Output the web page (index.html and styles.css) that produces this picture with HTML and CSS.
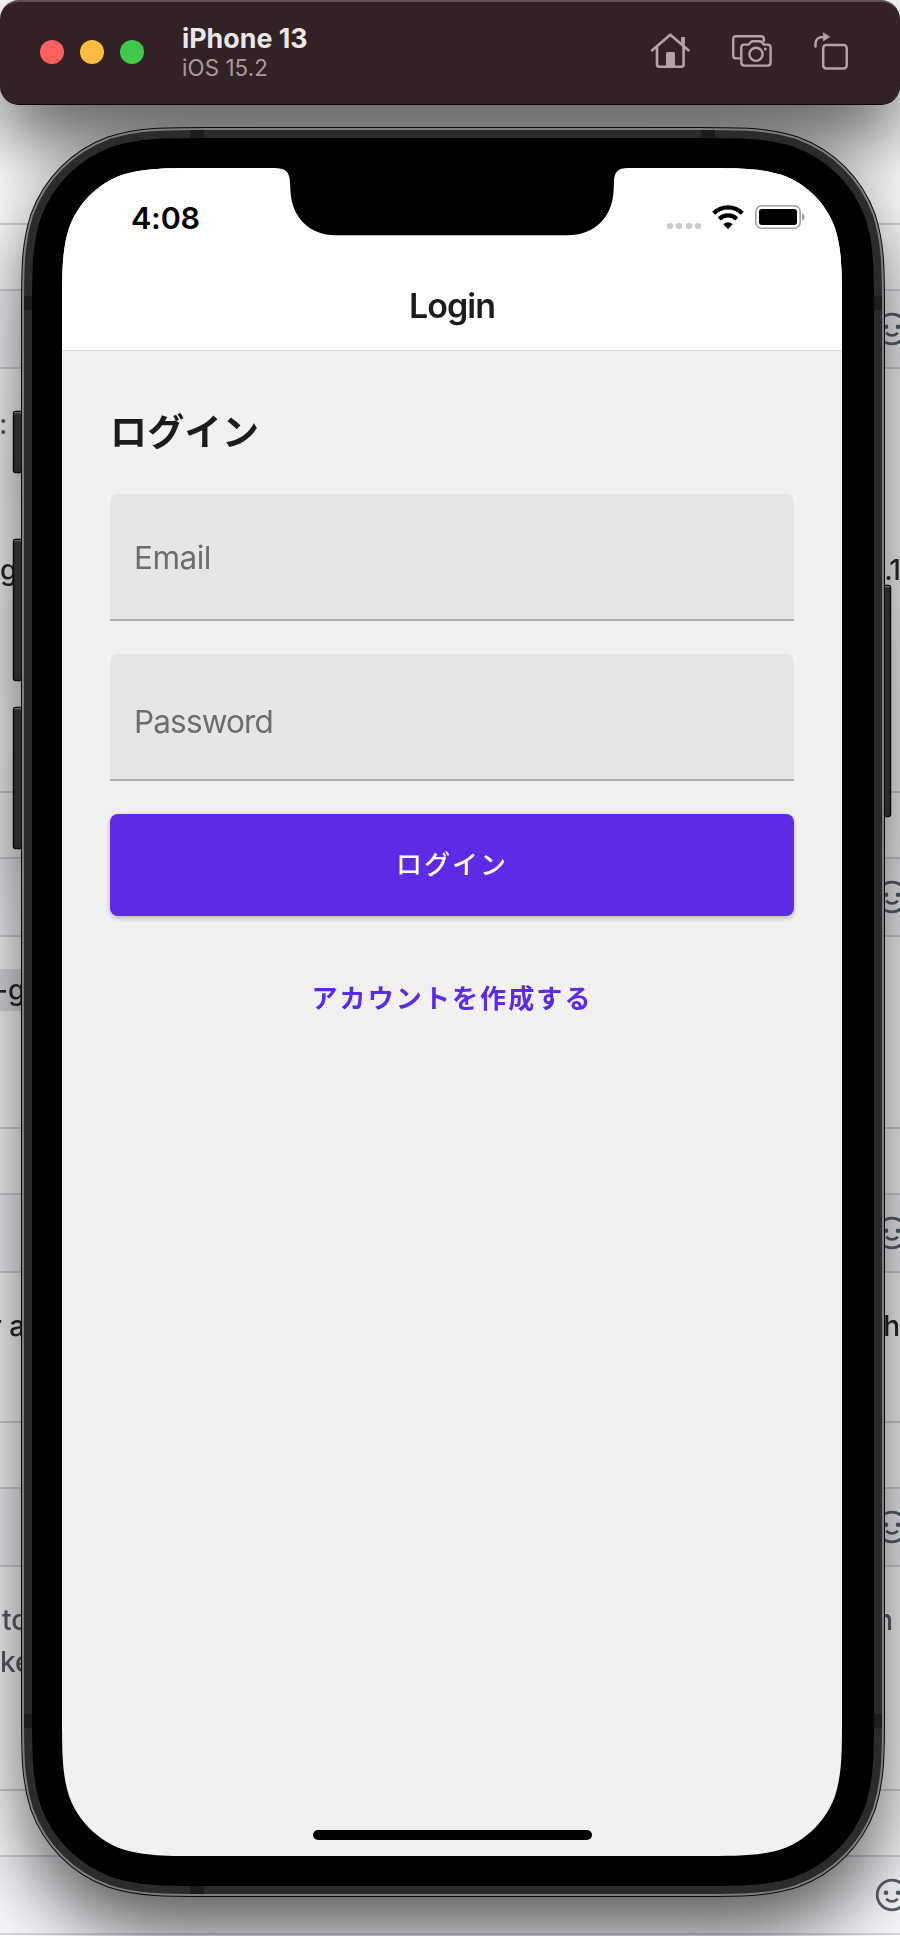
FILE: index.html
```
<!DOCTYPE html>
<html lang="ja">
<head>
<meta charset="utf-8">
<title>iPhone 13</title>
<link rel="stylesheet" href="styles.css">
</head>
<body>
<svg width="0" height="0" class="defs">
  <defs>
    <g id="smile">
      <circle cx="17" cy="17" r="14.8" fill="none" stroke="currentColor" stroke-width="2.8"/>
      <circle cx="11" cy="14.8" r="2.3" fill="currentColor"/>
      <circle cx="23" cy="14.8" r="2.3" fill="currentColor"/>
      <path d="M12 21.4c2.6 2.6 7.4 2.6 10 0" fill="none" stroke="currentColor" stroke-width="2.8" stroke-linecap="round"/>
    </g>
    <path id="frame" d="M206.76,168 L699.24,168 C740.92,168 761.76,168 784.2,175.09 C808.69,184.01 827.99,203.31 836.91,227.8 C844,250.24 844,271.08 844,312.76 L844,1711.24 C844,1752.92 844,1773.76 836.91,1796.2 C827.99,1820.69 808.69,1839.99 784.2,1848.91 C761.76,1856 740.92,1856 699.24,1856 L206.76,1856 C165.08,1856 144.24,1856 121.8,1848.91 C97.31,1839.99 78.01,1820.69 69.09,1796.2 C62,1773.76 62,1752.92 62,1711.24 L62,312.76 C62,271.08 62,250.24 69.09,227.8 C78.01,203.31 97.31,184.01 121.8,175.09 C144.24,168 165.08,168 206.76,168Z"/>
  </defs>
</svg>

<main class="desktop">
  <!-- page behind the simulator window -->
  <div class="page">
    <div class="row h225"></div>
    <div class="row h66"></div>
    <div class="row h78 bar"><svg class="face" width="34" height="34"><use href="#smile"/></svg></div>
    <div class="row h424 lines">
      <div class="line muted colon"><span>:</span></div>
      <div class="line release"><span>g</span><span class="version">.1</span></div>
    </div>
    <div class="row h66"></div>
    <div class="row h78 bar"><svg class="face" width="34" height="34"><use href="#smile"/></svg></div>
    <div class="row h192 lines"><div class="line code"><span class="chip">-g</span></div></div>
    <div class="row h66"></div>
    <div class="row h78 bar"><svg class="face" width="34" height="34"><use href="#smile"/></svg></div>
    <div class="row h150 lines"><div class="line para"><span>r a</span><span class="end">h</span></div></div>
    <div class="row h66"></div>
    <div class="row h78 bar"><svg class="face" width="34" height="34"><use href="#smile"/></svg></div>
    <div class="row h224 lines">
      <div class="line muted quote"><span>to</span><span class="end-n">n</span></div>
      <div class="line muted quote-next"><span>ke</span></div>
    </div>
    <div class="row h66"></div>
    <div class="row h78 bar"><svg class="face" width="34" height="34"><use href="#smile"/></svg></div>
  </div>

  <div class="simulator">
    <header class="toolbar">
      <div class="lights"><i class="red"></i><i class="yellow"></i><i class="green"></i></div>
      <div class="titles"><b class="device">iPhone 13</b><span class="os">iOS 15.2</span></div>
      <div class="tools">
        <svg width="40" height="38" viewBox="0 0 40 38" fill="none" stroke="#b3a3a6" stroke-width="2.6" stroke-linecap="round" stroke-linejoin="round">
          <path d="M2.2 18.3 L20.3 2.7 L38.4 18.3 M7 15v17.5q0 2.3 2.3 2.3h22q2.3 0 2.3-2.3V15"/>
          <path d="M31.2 5h3.7v10l-3.7-3z" fill="#b3a3a6" stroke="none"/>
          <path d="M16 35V21.5q0-1.500 1.500-1.500h6q1.500 0 1.500 1.500V35z" fill="#b3a3a6" stroke="none"/>
        </svg>
        <svg width="40" height="32" viewBox="0 0 40 32" fill="none" stroke="#b3a3a6" stroke-width="2.4" stroke-linecap="round" stroke-linejoin="round">
          <path d="M8 23.400H4.200q-3 0-3-3V4.200q0-3 3-3h25q2.600 0 2.600 2.600V6"/>
          <path d="M11.800 9.600h4.200q1.200 0 2-1.400l.8-.9q.8-1 2-1h7q1.200 0 2 1l.8.9q.8 1.400 2 1.400h3q3 0 3 3v15q0 3-3 3H12.300q-3 0-3-3v-15q0-3 3-3z"/>
          <circle cx="24" cy="19.300" r="6.600"/><circle cx="33.300" cy="14" r="1.500" fill="#b3a3a6" stroke="none"/>
        </svg>
        <svg width="34" height="38" viewBox="0 0 34 38" fill="none" stroke="#b3a3a6" stroke-width="2.500" stroke-linecap="round">
          <rect x="9.200" y="13" width="23.500" height="23.500" rx="3"/>
          <path d="M1.500 14.500v-3c0-4 3-6.600 8-6.600"/>
          <path d="M9.300.8v8.200l6.300-4.100z" fill="#b3a3a6" stroke="#b3a3a6" stroke-width=".6"/>
        </svg>
      </div>
    </header>

    <section class="phone">
      <svg class="bezel" width="900" height="1936" viewBox="0 0 900 1936">
        <g fill="#2b2b2b" stroke="#0c0c0c" stroke-width="1.500">
          <rect x="13.500" y="411.500" width="12" height="61" rx="2"/>
          <rect x="13.500" y="539.500" width="12" height="141" rx="2"/>
          <rect x="13.500" y="707.500" width="12" height="141" rx="2"/>
          <rect x="880" y="585.500" width="10.500" height="231" rx="2"/>
        </g>
        <g stroke="#6c6c6c" stroke-width="1.300">
          <path d="M14.500 412.700h7M14.500 540.700h7M14.500 708.700h7M885 586.700h5"/>
        </g>
        <use href="#frame" fill="#000" stroke="#0a0a0a" stroke-width="82"/>
        <use href="#frame" fill="#000" stroke="#7e7c7c" stroke-width="80"/>
        <use href="#frame" fill="#000" stroke="#2b2b2b" stroke-width="76"/>
        <path fill="#1c1c1c" d="M190 130h14v8h-14zM701 130h14v8h-14zM190 1886h14v8h-14zM24 296h8v14h-8zM874 296h8v14h-8zM24 1714h8v14h-8zM874 1714h8v14h-8z"/>
        <use href="#frame" fill="#000" stroke="#000" stroke-width="60"/>
      </svg>

      <div class="screen">
        <svg class="notch" width="340" height="68" viewBox="212 0 340 68"><path d="M212,0 C223,0 227.500,3 228,14 L228.500,24 C230,49 247,67.300 274,67.300 L505,67.300 C533,67.300 550,49 551.500,24 L552,14 C552,4 556,0 566,0Z"/></svg>
        <div class="top">
          <div class="status">
            <span class="clock">4:08</span>
            <div class="signals">
              <div class="dots"><i></i><i></i><i></i><i></i></div>
              <svg class="wifi" width="32" height="24" viewBox="0 0 32 24" fill="none" stroke="#000" stroke-width="4.400">
                <path d="M1.700 8.300a20.200 20.200 0 0 1 28.600 0"/>
                <path d="M7.300 14a12.300 12.300 0 0 1 17.400 0" stroke-width="4.200"/>
                <path d="M16 24l-4.700-4.700a6.600 6.600 0 0 1 9.400 0z" fill="#000" stroke="none"/>
              </svg>
              <svg width="50" height="24" viewBox="0 0 50 24"><rect x=".800" y=".800" width="44.400" height="22.400" rx="6" fill="none" stroke="#a0a0a0" stroke-width="1.600"/><rect x="4" y="4" width="38" height="16" rx="3" fill="#000"/><path d="M47 8.500c3.600 1 3.600 6 0 7z" fill="#a0a0a0"/></svg>
            </div>
          </div>
          <h1 class="nav">Login</h1>
        </div>
        <div class="form">
          <h2 class="heading">ログイン</h2>
          <div class="field email"><span>Email</span></div>
          <div class="field password"><span>Password</span></div>
          <div class="button"><span>ログイン</span></div>
          <div class="link">アカウントを作成する</div>
        </div>
        <div class="home"></div>
      </div>
    </section>
  </div>
</main>
</body>
</html>
```
FILE: styles.css
```
* { box-sizing: border-box; }
body { margin: 0; font-family: Inter, "Noto Sans CJK JP", sans-serif; }
.defs { display: block; }
.desktop { position: relative; width: 900px; height: 1936px; overflow: hidden; background: #fff; }

/* page behind the window */
.page { display: flex; flex-direction: column; will-change: transform; }
.row { flex: none; border-bottom: 2px solid #d0d7de; display: flex; overflow: hidden; }
.bar { background: #f5f8fb; align-items: center; justify-content: flex-end; }
.face { color: #57606a; margin-right: -9px; flex: none; }
.lines { flex-direction: column; }
.h66 { height: 66px; } .h78 { height: 78px; } .h150 { height: 150px; }
.h192 { height: 192px; } .h224 { height: 224px; } .h225 { height: 225px; } .h424 { height: 424px; }
.line { display: flex; justify-content: space-between; font-size: 28px; font-weight: 500; line-height: 42px; color: #24292f; white-space: nowrap; flex: none; }
.muted { color: #57606a; }
.colon { margin: 34px 0 0 -1px; }
.release { margin: 104px 0 0 0; }
.version { margin-right: 0; letter-spacing: -1px; }
.code { margin-top: 32px; }
.chip { background: #dfe1e4; width: 40px; margin-left: -5px; }
.para { margin: 32px 0 0 -9px; }
.quote { margin: 32px 0 0 2px; }
.end-n { margin-right: 7px; }

/* simulator window */
.simulator { position: absolute; inset: 0; filter: drop-shadow(0 36px 38px rgba(0,0,0,.64)); }
.toolbar { position: relative; height: 105px; border-radius: 19px; background: #332225; border-top: 2px solid #5e5052; border-bottom: 1px solid #0b0607; display: flex; align-items: center; padding: 0 52px 2px 40px; }
.lights { display: flex; gap: 16px; margin-right: 38px; }
.lights i { width: 24px; height: 24px; border-radius: 50%; }
.red { background: #fc615d; } .yellow { background: #fdbc40; } .green { background: #3fc84b; }
.titles { flex: 1; display: flex; flex-direction: column; margin-top: -1px; }
.device { font-size: 26.8px; line-height: 32px; font-weight: 700; color: #ebe6e7; }
.os { font-size: 22.3px; line-height: 27px; color: #a99a9d; letter-spacing: .1px; }
.tools { display: flex; align-items: center; gap: 42px; margin-top: -3px; }

.bezel { position: absolute; left: 0; top: 0; }
.screen { position: absolute; left: 62px; top: 168px; width: 780px; height: 1688px; background: #f1f1f1; display: flex; flex-direction: column;
  clip-path: path("M144.76,0 L635.24,0 C676.92,0 697.76,0 720.2,7.09 C744.69,16.01 763.99,35.31 772.91,59.8 C780,82.24 780,103.08 780,144.76 L780,1543.24 C780,1584.92 780,1605.76 772.91,1628.2 C763.99,1652.69 744.69,1671.99 720.2,1680.91 C697.76,1688 676.92,1688 635.24,1688 L144.76,1688 C103.08,1688 82.24,1688 59.8,1680.91 C35.31,1671.99 16.01,1652.69 7.09,1628.2 C0,1605.76 0,1584.92 0,1543.24 L0,144.76 C0,103.08 0,82.24 7.09,59.8 C16.01,35.31 35.31,16.01 59.8,7.09 C82.24,0 103.08,0 144.76,0Z"); }
.notch { position: absolute; left: 212px; top: 0; overflow: visible; }
.top { height: 183px; background: #fff; border-bottom: 1px solid #d8d8d8; flex: none; }
.status { display: flex; justify-content: space-between; align-items: center; height: 98px; padding: 0 37px 0 69px; }
.clock { font-size: 30.5px; font-weight: 600; color: #000; line-height: 36px; margin-top: 2px; letter-spacing: -.2px; }
.signals { display: flex; align-items: center; }
.dots { display: flex; gap: 3.3px; margin: 17px 11px 0 0; }
.dots i { width: 6px; height: 6px; border-radius: 2px; background: #ccc; }
.wifi { margin-right: 11px; }
.nav { margin: 19px 0 0; text-align: center; font-size: 34px; line-height: 42px; font-weight: 600; color: #1c1c1e; letter-spacing: -1px; }
.form { padding: 54px 48px 0; display: flex; flex-direction: column; }
.heading { margin: 0 0 33px; font-size: 37px; line-height: 56px; font-weight: 700; color: #1c1c1e; letter-spacing: .3px; }
.field { height: 127px; background: #e6e6e6; border-bottom: 2px solid #b0b0b0; border-radius: 8px 8px 0 0; padding: 0 24px; display: flex; align-items: center; font-size: 31.5px; color: #6d6d6d; margin-bottom: 33px; }
.email span { margin-top: 2px; letter-spacing: -.5px; }
.password span { margin-top: 10px; letter-spacing: -.85px; }
.button { height: 102px; border-radius: 8px; background: #5d2ae8; color: #fff; display: flex; align-items: center; justify-content: center; font-size: 26px; letter-spacing: 2px; font-weight: 500; box-shadow: 0 2px 5px rgba(0,0,0,.25); }
.button span { margin-top: -5px; }
.link { margin-top: 63px; line-height: 40px; text-align: center; color: #5d2ae8; font-size: 26px; letter-spacing: 2.1px; font-weight: 700; }
.home { position: absolute; left: 251px; bottom: 16px; width: 279px; height: 10px; border-radius: 5px; background: #000; }
```
